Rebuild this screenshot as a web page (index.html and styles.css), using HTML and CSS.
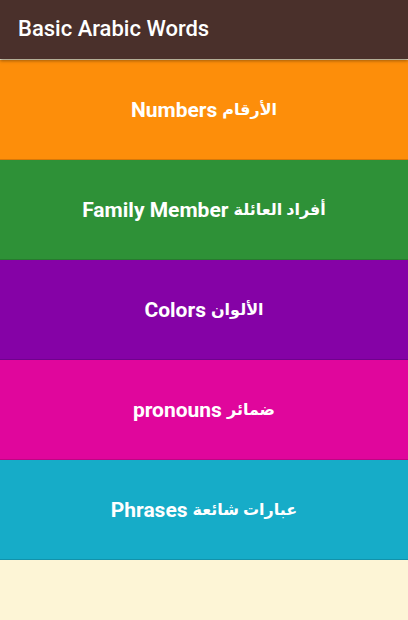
FILE: index.html
```html
<!DOCTYPE html>
<html>
<head>
<meta charset="utf-8">
<link rel="stylesheet" href="styles.css">
</head>
<body>
<div class="app">
  <header class="appbar">Basic Arabic Words</header>
  <main class="list">
    <div class="item numbers">Numbers <span class="ar">الأرقام</span></div>
    <div class="item family">Family Member <span class="ar">أفراد العائلة</span></div>
    <div class="item colors">Colors <span class="ar">الألوان</span></div>
    <div class="item pronouns">pronouns <span class="ar">ضمائر</span></div>
    <div class="item phrases">Phrases <span class="ar">عبارات شائعة</span></div>
  </main>
</div>
</body>
</html>
```
FILE: styles.css
```css
html, body {
  margin: 0;
  padding: 0;
  height: 100%;
}
body {
  background: #fdf5d6;
  font-family: Roboto, "Noto Sans", "DejaVu Sans", sans-serif;
}
.app {
  display: flex;
  flex-direction: column;
  min-height: 100%;
}
.appbar {
  height: 59px;
  background: #4a302b;
  color: #fff;
  font-size: 22px;
  font-weight: 500;
  display: flex;
  align-items: center;
  padding-left: 18px;
  padding-bottom: 2px;
  box-sizing: border-box;
  box-shadow: 0 2px 3px rgba(0,0,0,0.35);
  position: relative;
  z-index: 2;
}
.list {
  display: flex;
  flex-direction: column;
  margin-top: 1px;
}
.item {
  height: 100px;
  display: flex;
  align-items: center;
  justify-content: center;
  gap: 5px;
  color: #fff;
  font-size: 21px;
  font-weight: 700;
  box-sizing: border-box;
  border-bottom: 1px solid rgba(0,0,0,0.15);
}
.ar {
  font-size: 16px;
  font-weight: 700;
}
.numbers { background: #fd8e0a; }
.family { background: #2e9137; }
.colors { background: #8502a6; }
.pronouns { background: #e0069c; }
.phrases { background: #16acc8; }
```
